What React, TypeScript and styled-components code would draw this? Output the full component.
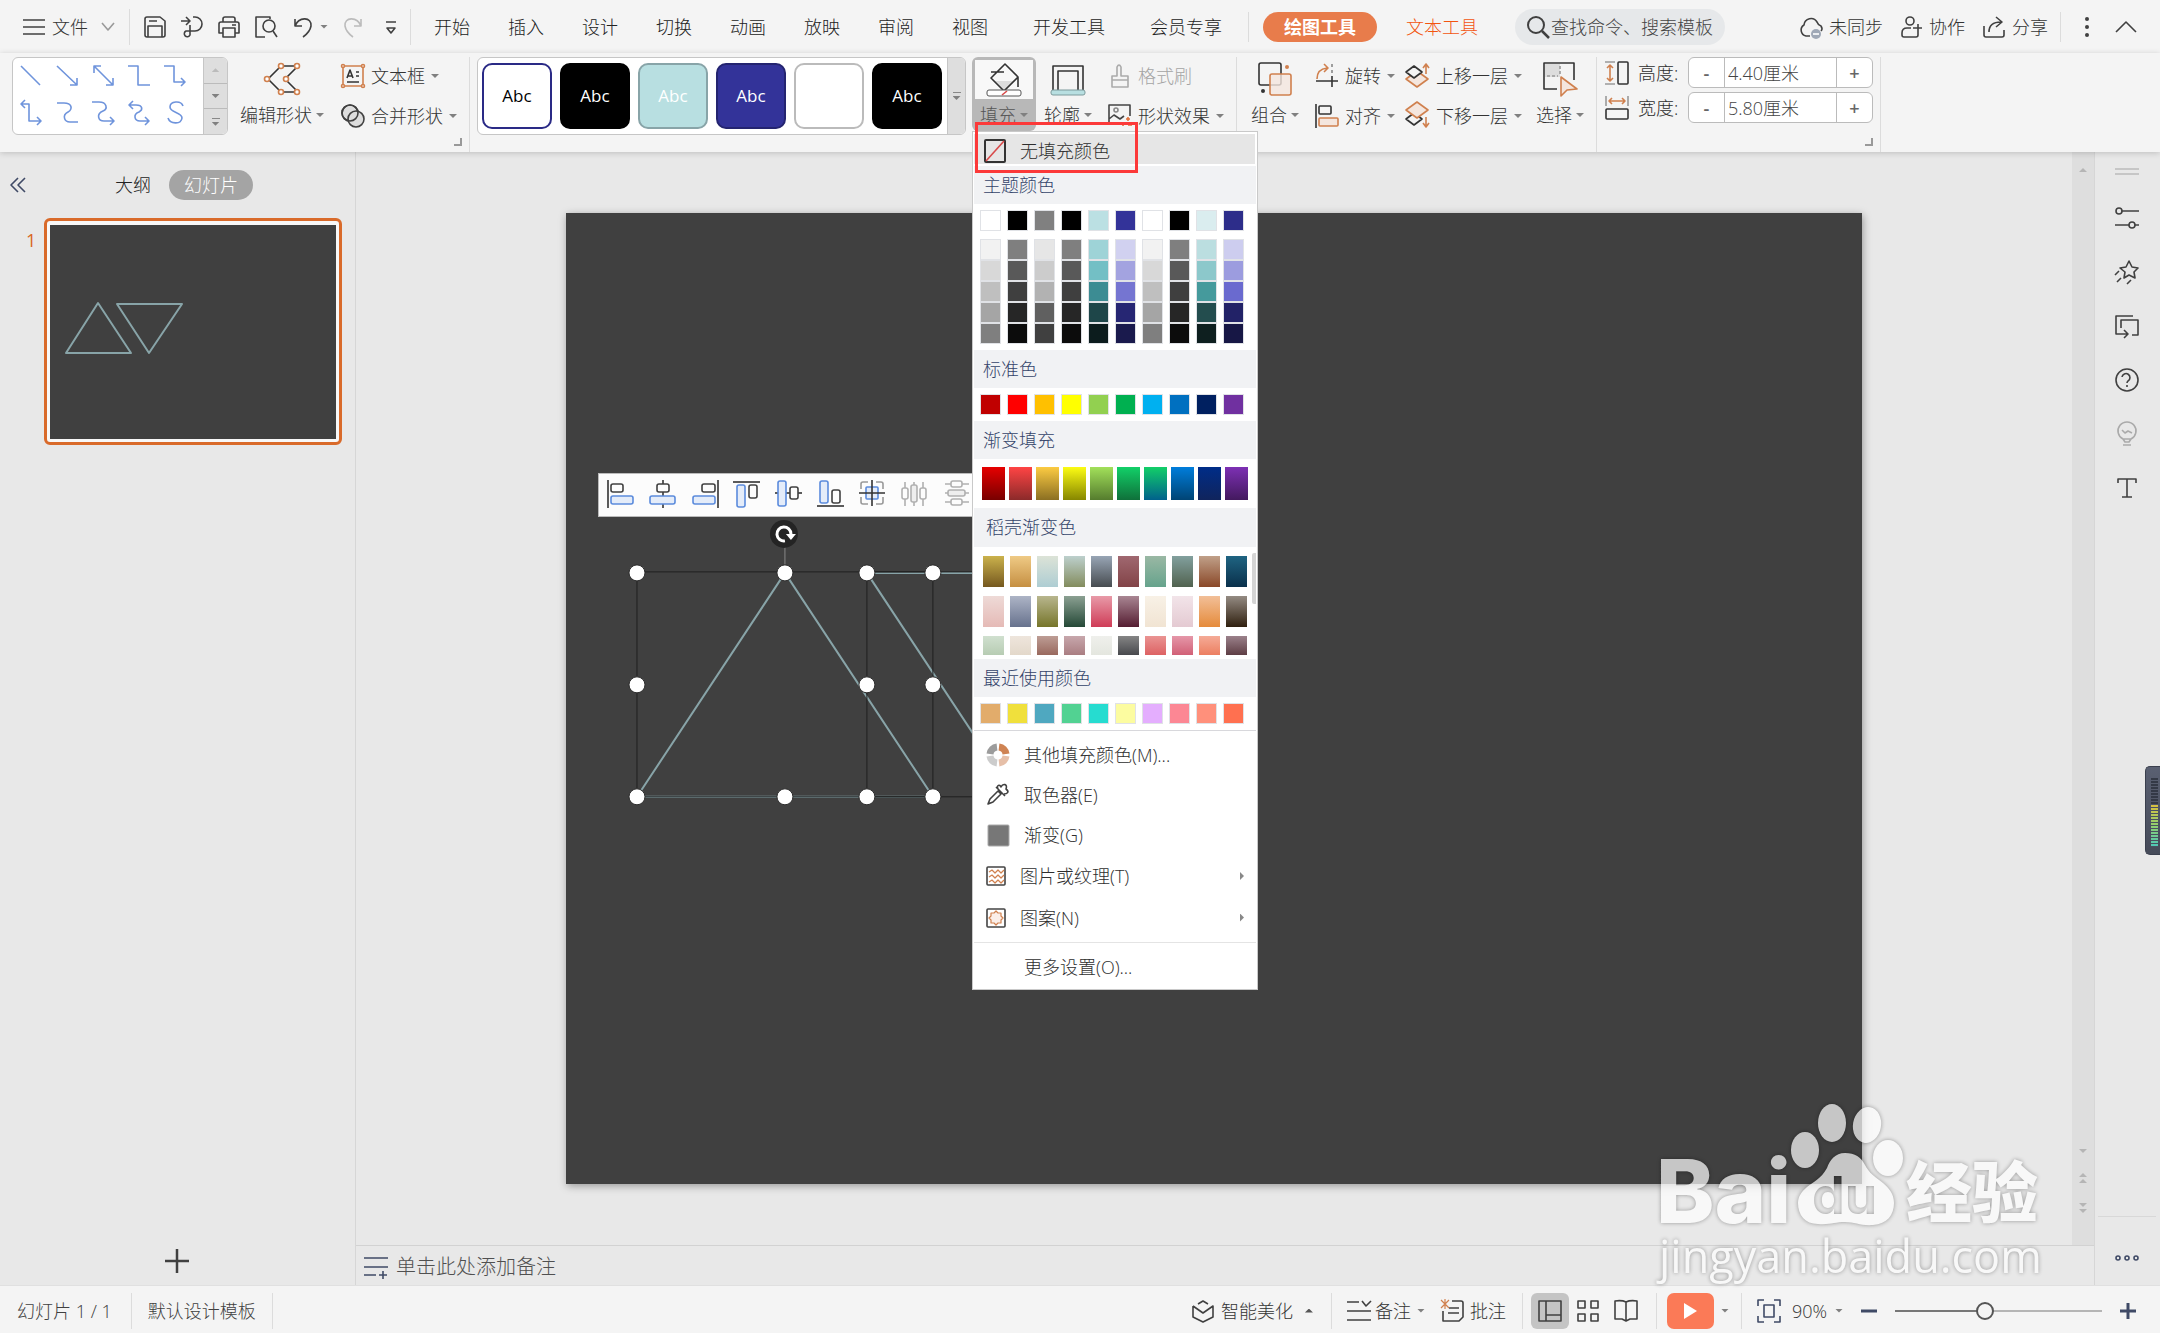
import React from 'react';
import styled, { createGlobalStyle, css } from 'styled-components';

const GlobalStyle = createGlobalStyle`
  * { box-sizing: border-box; }
  html, body { margin: 0; padding: 0; }
  body {
    font-family: "Open Sans", "Noto Sans CJK SC", sans-serif;
    font-weight: 300;
    font-size: 18px;
    line-height: 24px;
    color: #2e2e2e;
    background: #e8e8e8;
    overflow: hidden;
  }
  button, input, select, textarea {
    font: inherit;
    color: inherit;
    border: 0;
    padding: 0;
    margin: 0;
    background: none;
    outline: none;
  }
  button { cursor: pointer; white-space: nowrap; }
`;

/* ---------- shared parts ---------- */

const Shell = styled.div`
  display: flex;
  flex-direction: column;
  height: 100vh;
`;

const Row = styled.div<{ $gap?: number; $ml?: number }>`
  display: flex;
  align-items: center;
  gap: ${(p) => p.$gap ?? 0}px;
  margin-left: ${(p) => p.$ml ?? 0}px;
`;

const Caret = styled.i<{ $up?: boolean; $color?: string }>`
  width: 8px;
  height: 4px;
  flex: none;
  background: ${(p) => p.$color ?? '#808080'};
  clip-path: ${(p) => (p.$up ? 'polygon(50% 0, 100% 100%, 0 100%)' : 'polygon(0 0, 100% 0, 50% 100%)')};
`;

const VLine = styled.span<{ $h: number; $ml?: number; $mr?: number }>`
  width: 1px;
  height: ${(p) => p.$h}px;
  flex: none;
  background: #dcdcdc;
  margin-left: ${(p) => p.$ml ?? 0}px;
  margin-right: ${(p) => p.$mr ?? 0}px;
`;

const Svg = styled.svg`
  display: block;
  flex: none;
  fill: none;
  stroke: currentColor;
  stroke-linejoin: round;
  overflow: visible;
`;

type IconProps = { w: number; h: number; children: React.ReactNode; color?: string };
const Icon = ({ w, h, children, color = '#404040' }: IconProps) => (
  <Svg width={w} height={h} viewBox={`0 0 ${w} ${h}`} strokeWidth="1.6" color={color} aria-hidden="true">
    {children}
  </Svg>
);

const OR = '#d0804e';
const ORF = '#f4e6de';

/* ---------- title bar ---------- */

const TitleBar = styled.header`
  display: flex;
  align-items: center;
  height: 53px;
  padding: 0 23px;
  background: #f4f4f4;
`;

const TextButton = styled.button<{ $gap?: number; $muted?: boolean }>`
  display: flex;
  align-items: center;
  gap: ${(p) => p.$gap ?? 6}px;
  color: ${(p) => (p.$muted ? '#a4a4a4' : '#333')};
`;

const Tabs = styled.nav`
  display: flex;
  align-items: center;
  gap: 38px;
  margin-left: 23px;
`;

const Tab = styled.button<{ $long?: boolean }>`
  color: #222;
  padding-left: ${(p) => (p.$long ? 7 : 0)}px;
`;

const ActiveTab = styled.button`
  height: 30px;
  padding: 0 21px;
  margin: 0 29px 0 14px;
  border-radius: 15px;
  background: #e87c4b;
  color: #fff;
  font-weight: 700;
`;

const AccentTab = styled.button`
  color: #f25410;
`;

const Search = styled.label`
  display: flex;
  align-items: center;
  width: 210px;
  height: 36px;
  margin-left: 37px;
  padding-left: 12px;
  border-radius: 18px;
  background: #e6e8ea;
`;

const SearchInput = styled.input`
  flex: 1;
  min-width: 0;
  height: 24px;
  &::placeholder { color: #444; opacity: 1; }
`;

const Account = styled.div`
  display: flex;
  align-items: center;
  margin-left: auto;
  gap: 18px;
`;

/* ---------- ribbon ---------- */

const Ribbon = styled.div`
  position: relative;
  z-index: 2;
  display: flex;
  align-items: flex-start;
  height: 99px;
  padding: 4px 0 0 12px;
  background: #f4f4f4;
  box-shadow: 0 1px 6px rgba(0, 0, 0, 0.18);
`;

const Group = styled.section<{ $ml?: number; $pr?: number }>`
  position: relative;
  display: flex;
  align-items: flex-start;
  height: 95px;
  padding-right: ${(p) => p.$pr ?? 12}px;
  margin-left: ${(p) => p.$ml ?? 0}px;
  border-right: 1px solid #dcdcdc;
`;

const Launcher = styled.button`
  position: absolute;
  right: 7px;
  bottom: 6px;
  width: 8px;
  height: 8px;
  border-right: 2px solid #999;
  border-bottom: 2px solid #999;
`;

const Gallery = styled.div<{ $w: number }>`
  display: flex;
  width: ${(p) => p.$w}px;
  height: 78px;
  background: #fff;
  border: 1px solid #c6c6c6;
  border-radius: 6px;
  overflow: hidden;
`;

const LineGrid = styled.div`
  flex: 1;
  display: grid;
  grid-template-columns: repeat(5, 36px);
  grid-template-rows: 36px 36px;
  padding-left: 1px;
`;

const LineButton = styled.button`
  display: grid;
  place-items: center;
`;

const GalleryScroll = styled.div<{ $w: number }>`
  width: ${(p) => p.$w}px;
  display: flex;
  flex-direction: column;
  border-left: 1px solid #c6c6c6;
  background: #dedede;
`;

const ScrollStep = styled.button`
  flex: 1;
  display: flex;
  flex-direction: column;
  align-items: center;
  justify-content: center;
  gap: 3px;
  & + & { border-top: 1px solid #bbb; }
`;

const Dash = styled.i`
  width: 8px;
  height: 1px;
  background: #888;
`;

const StyleList = styled.div`
  flex: 1;
  display: flex;
  align-items: center;
  gap: 8px;
  padding-left: 4px;
`;

const StyleTile = styled.button<{ $bg: string; $border: string; $fg: string }>`
  width: 70px;
  height: 66px;
  border-radius: 10px;
  border: 2px solid ${(p) => p.$border};
  background: ${(p) => p.$bg};
  color: ${(p) => p.$fg};
  font-weight: 400;
  font-size: 17px;
`;

const BigButton = styled.button<{ $ml?: number }>`
  display: flex;
  flex-direction: column;
  align-items: center;
  gap: 7px;
  padding-top: 5px;
  margin-left: ${(p) => p.$ml ?? 0}px;
  color: #333;
`;

const Label = styled.span`
  display: flex;
  align-items: center;
  gap: 4px;
  height: 24px;
`;

const Stack = styled.div<{ $ml?: number }>`
  display: flex;
  flex-direction: column;
  gap: 16px;
  padding-top: 7px;
  margin-left: ${(p) => p.$ml ?? 0}px;
`;

const FillWrap = styled.div`
  position: relative;
  margin-left: 6px;
`;

const FillButton = styled.button`
  display: flex;
  flex-direction: column;
  align-items: center;
  width: 64px;
  height: 74px;
  padding: 3px;
  gap: 4px;
  border-radius: 6px;
  background: #b8b8b8;
  color: #555;
`;

const FillFace = styled.span`
  display: flex;
  justify-content: center;
  width: 58px;
  height: 39px;
  padding-top: 2px;
  background: #f8f8f8;
`;

const SizeStack = styled.div`
  display: flex;
  flex-direction: column;
  gap: 4px;
  margin-left: 8px;
`;

const SizeRow = styled.div`
  display: flex;
  align-items: center;
  gap: 9px;
  height: 31px;
`;

const SizeLabel = styled.label`
  width: 41px;
  white-space: nowrap;
`;

const Spinner = styled.div`
  display: flex;
  width: 185px;
  height: 31px;
  border: 1px solid #bbb;
  border-radius: 6px;
  background: #fff;
  overflow: hidden;
`;

const SpinStep = styled.button`
  width: 35px;
  font-weight: 600;
  color: #666;
`;

const SpinInput = styled.input`
  width: 113px;
  padding: 0 3px;
  border-left: 1px solid #bbb;
  border-right: 1px solid #bbb;
  color: #444;
`;

/* ---------- fill drop-down ---------- */

const Popup = styled.div`
  position: absolute;
  top: 74px;
  left: 0;
  width: 286px;
  padding: 2px 1px;
  background: #fff;
  border: 1px solid #c9c9c9;
  color: #2e2e2e;
`;

const NoFill = styled.button`
  display: flex;
  align-items: center;
  gap: 12px;
  width: 281px;
  height: 30px;
  padding: 3px 0 0 10px;
  margin-bottom: 2px;
  background: #e6e6e6;
`;

const Highlight = styled.span`
  position: absolute;
  left: 2px;
  top: -10px;
  width: 163px;
  height: 51px;
  border: 3px solid #fc3939;
  pointer-events: none;
`;

const Heading = styled.h3<{ $inset?: boolean }>`
  margin: 0;
  height: ${(p) => (p.$inset ? 39 : 38)}px;
  padding-left: ${(p) => (p.$inset ? 12 : 9)}px;
  background: #f1f2f4;
  color: #34446a;
  font-size: 18px;
  font-weight: 300;
  line-height: 38px;
`;

const Swatches = styled.div<{ $v: number; $bottom?: number }>`
  display: grid;
  grid-template-columns: repeat(10, 21px);
  column-gap: 6px;
  padding: ${(p) => p.$v}px 0 ${(p) => p.$bottom ?? p.$v}px 6px;
`;

const Swatch = styled.button<{ $c: string }>`
  height: 21px;
  border: 1px solid #e0e2e6;
  background: ${(p) => p.$c};
`;

const GradRow = styled.div`
  display: grid;
  grid-template-columns: repeat(10, 23px);
  column-gap: 4px;
  padding: 8px 0 8px 8px;
`;

const ShellRow = styled.div`
  display: grid;
  grid-template-columns: repeat(10, 21px);
  gap: 9px 6px;
  height: 112px;
  padding: 9px 0 4px 9px;
`;

const ShellArea = styled.div`
  display: flex;
  justify-content: space-between;
`;

const ShellThumb = styled.span`
  width: 4px;
  height: 51px;
  margin-top: 6px;
  border-radius: 2px 0 0 2px;
  background: #d4d4d4;
`;

const GradSwatch = styled.button<{ $a: string; $b: string; $h: number }>`
  height: ${(p) => p.$h}px;
  background: linear-gradient(${(p) => p.$a}, ${(p) => p.$b});
`;

const Rule = styled.hr<{ $c: string }>`
  height: 1px;
  margin: 0;
  border: 0;
  background: ${(p) => p.$c};
`;

const MenuItem = styled.button<{ $h: number; $plain?: boolean }>`
  display: flex;
  align-items: center;
  gap: 14px;
  width: 100%;
  height: ${(p) => p.$h}px;
  padding: ${(p) => (p.$plain ? '4px 12px 0 50px' : '0 12px')};
`;

const Submenu = styled.i`
  width: 4px;
  height: 8px;
  margin-left: auto;
  background: #888;
  clip-path: polygon(0 0, 100% 50%, 0 100%);
`;

/* ---------- body ---------- */

const Body = styled.div`
  flex: 1;
  display: flex;
  min-height: 0;
`;

const Outline = styled.aside`
  display: flex;
  flex-direction: column;
  flex: none;
  width: 356px;
  border-right: 1px solid #d6d6d6;
`;

const OutlineHead = styled.div`
  display: flex;
  align-items: center;
  height: 66px;
  padding: 0 10px;
`;

const OutlineTab = styled.button<{ $on?: boolean }>`
  height: 30px;
  color: #222;
  ${(p) =>
    p.$on
      ? css`
          margin-left: 18px;
          padding: 0 15px;
          border-radius: 15px;
          background: #a4a4a4;
          color: #fff;
        `
      : css`
          margin-left: 89px;
        `}
`;

const ThumbRow = styled.div`
  display: flex;
  gap: 8px;
  padding-left: 26px;
  color: #d9661c;
  line-height: 44px;
  font-weight: 400;
`;

const Thumb = styled.button`
  width: 298px;
  height: 227px;
  padding: 3px;
  border: 3px solid #d96a2a;
  border-radius: 6px;
  background: #f8f8f8;
  & > svg { background: #404040; stroke: #88a4a8; }
`;

const AddSlide = styled.button`
  margin: auto 0 12px 165px;
  width: 24px;
  height: 24px;
`;

const Main = styled.main`
  flex: 1;
  display: flex;
  flex-direction: column;
  min-width: 0;
`;

const Stage = styled.div`
  flex: 1;
  display: flex;
  min-height: 0;
`;

const Workspace = styled.div`
  flex: 1;
  display: flex;
  align-items: center;
  justify-content: center;
`;

const Slide = styled.div`
  position: relative;
  width: 75.5%;
  aspect-ratio: 4 / 3;
  background: #404040;
  box-shadow: 1px 2px 8px rgba(0, 0, 0, 0.35);
`;

const FloatBar = styled.div`
  position: absolute;
  left: 32px;
  top: 260px;
  display: flex;
  align-items: center;
  gap: 14px;
  height: 44px;
  padding: 0 8px 2px;
  border: 1px solid #bbb;
  background: #fcfcfc;
`;

const SlideArt = styled.svg`
  display: block;
  width: 100%;
  height: 100%;
`;

const ScrollTrack = styled.div`
  display: flex;
  flex-direction: column;
  align-items: center;
  gap: 20px;
  width: 22px;
  padding: 16px 0 32px;
  background: #dedede;
`;

const ScrollArrow = styled.button<{ $bottom?: boolean }>`
  display: flex;
  flex-direction: column;
  gap: 2px;
  margin-top: ${(p) => (p.$bottom ? 'auto' : '0')};
`;

const Notes = styled.label`
  display: flex;
  align-items: center;
  gap: 8px;
  height: 40px;
  padding: 2px 0 0 8px;
  border-top: 1px solid #d2d2d2;
`;

const NotesInput = styled.input`
  flex: 1;
  height: 30px;
  font-size: 20px;
  &::placeholder { color: #505050; opacity: 1; }
`;

const SidePane = styled.aside`
  display: flex;
  flex-direction: column;
  align-items: center;
  flex: none;
  width: 66px;
  padding-right: 2px;
  border-left: 1px solid #d6d6d6;
`;

const SideButton = styled.button`
  display: grid;
  place-items: center;
  width: 40px;
  height: 54px;
`;

const SideGrip = styled.button`
  display: grid;
  place-items: center;
  width: 40px;
  height: 39px;
`;

const SideMore = styled.button`
  display: grid;
  place-items: center;
  width: 58px;
  height: 69px;
  margin-top: auto;
  padding: 28px 0 14px;
  border-top: 1px solid #d8d8d8;
`;

const Meter = styled.div`
  position: absolute;
  right: 0;
  top: 766px;
  width: 15px;
  height: 89px;
  padding: 11px 0 0 5px;
  border: 1px solid #3a3f4d;
  border-right: 0;
  border-radius: 5px 0 0 5px;
  background: linear-gradient(#5a6072, #454a58);
`;

/* ---------- status bar ---------- */

const StatusBar = styled.footer`
  display: flex;
  align-items: center;
  height: 48px;
  padding: 2px 24px 0 17px;
  border-top: 1px solid #e0e0e0;
  background: #f4f4f4;
  color: #404040;
`;

const StatusTools = styled.div`
  display: flex;
  align-items: center;
  margin-left: auto;
`;

const ViewButton = styled.button<{ $on?: boolean }>`
  display: grid;
  place-items: center;
  width: 38px;
  height: 36px;
  border-radius: 6px;
  background: ${(p) => (p.$on ? '#c4c4c4' : 'transparent')};
`;

const PlayButton = styled.button`
  display: grid;
  place-items: center;
  width: 47px;
  height: 36px;
  margin-left: 10px;
  margin-right: 7px;
  border-radius: 7px;
  background: #fb7a57;
`;

const ZoomSlider = styled.input`
  appearance: none;
  width: 207px;
  height: 20px;
  margin: 0 18px;
  background: linear-gradient(90deg, #777 43%, #b5b5b5 43%) center / 100% 2px no-repeat;
  &::-webkit-slider-thumb {
    appearance: none;
    width: 18px;
    height: 18px;
    border: 2px solid #555;
    border-radius: 50%;
    background: #f4f4f4;
  }
`;

const Watermark = styled.svg`
  position: absolute;
  right: 115px;
  bottom: 43px;
  z-index: 3;
  pointer-events: none;
  opacity: 0.7;
  filter: drop-shadow(0 0 2px rgba(0, 0, 0, 0.5));
`;

/* ---------- data ---------- */

const tabs = ['开始', '插入', '设计', '切换', '动画', '放映', '审阅', '视图'];
const longTabs = ['开发工具', '会员专享'];

const lineShapes = [
  'M1 1 L20 20',
  'M1 1 L21 20 M21 13 V20 H14',
  'M2 1 L21 20 M21 13 V20 H14 M2 8 V1 H9',
  'M0 1 H10 V20 H22',
  'M0 1 H10 V17 H21 M17 13 L21 17 L17 21',
  'M1 3 H9 V20 H21 M17 16 L21 20 L17 24 M5 -1 L1 3 L5 7',
  'M1 2 H8 C16 2 17 8 12 11 C6 14 8 21 14 21 H22',
  'M0 1 H7 C15 1 16 8 11 10 C4 13 6 20 12 20 H22 M18 16 L22 20 L18 24',
  'M1 4 H8 C15 4 15 9 11 11 C5 13 6 20 12 20 H21 M17 16 L21 20 L17 24 M5 0 L1 4 L5 8',
  'M19 5 C17 -1 6 0 6 6 C6 12 18 11 18 17 C17 24 6 23 4 17',
];

const tiles = [
  { bg: '#fff', border: '#2a2a86', fg: '#000', text: 'Abc' },
  { bg: '#000', border: '#000', fg: '#fff', text: 'Abc' },
  { bg: '#b8dfe1', border: '#88a4a8', fg: '#fff', text: 'Abc' },
  { bg: '#333399', border: '#242470', fg: '#fff', text: 'Abc' },
  { bg: '#fff', border: '#bbb', fg: '#fff', text: '' },
  { bg: '#000', border: '#000', fg: '#fff', text: 'Abc' },
];

const theme = ['#ffffff', '#000000', '#808080', '#000000', '#bbe0e3', '#333399', '#ffffff', '#000000', '#daedef', '#2d2d8a'];
const shades = [
  ['#f2f2f2', '#7f7f7f', '#e6e6e6', '#7f7f7f', '#9ed3d7', '#d1d1f0', '#f2f2f2', '#7f7f7f', '#bbdee0', '#cdcdef'],
  ['#d8d8d8', '#595959', '#cccccc', '#595959', '#73bfc5', '#a3a3e0', '#d8d8d8', '#595959', '#8cc8cb', '#9c9cdf'],
  ['#bfbfbf', '#3f3f3f', '#b2b2b2', '#3f3f3f', '#3c8c93', '#7575d1', '#bfbfbf', '#3f3f3f', '#459a9c', '#6a6acf'],
  ['#a5a5a5', '#262626', '#606060', '#262626', '#1e4649', '#262673', '#a5a5a5', '#262626', '#234d4e', '#222267'],
  ['#7f7f7f', '#0c0c0c', '#404040', '#0c0c0c', '#0c1c1d', '#1a1a4d', '#7f7f7f', '#0c0c0c', '#0e1f1f', '#171745'],
];
const standard = ['#c00000', '#ff0000', '#ffc000', '#ffff00', '#92d050', '#00b050', '#00b0f0', '#0070c0', '#002060', '#7030a0'];
const recent = ['#e2ac6b', '#f0e03c', '#4fa8c0', '#52d292', '#26dcd0', '#fcfca0', '#e4aefe', '#fc8794', '#ff907b', '#ff7050'];
const gradients = [
  ['#e60000', '#780000'], ['#ff4444', '#8b2a2a'], ['#fccb42', '#8b6f22'], ['#fcfc14', '#868600'], ['#a2e05a', '#557c2e'],
  ['#12d068', '#0f703a'], ['#12cf68', '#00618c'], ['#007ddb', '#004474'], ['#002d88', '#10245c'], ['#7d30b4', '#43195e'],
];
const shell = [
  ['#cbb24c', '#75581f'], ['#efca85', '#c58f42'], ['#dce3d7', '#aecdd3'], ['#bdd0cd', '#838c5d'], ['#98a5b5', '#474c50'],
  ['#a06870', '#824347'], ['#9ab8a4', '#66a38c'], ['#82a09e', '#51624f'], ['#c0a089', '#8a4828'], ['#1f6482', '#0a304b'],
  ['#eedad7', '#e5bab6'], ['#adb4c6', '#67728d'], ['#b8b68e', '#76752a'], ['#8ba092', '#254937'], ['#e89aa8', '#cf3c57'],
  ['#a98693', '#551d31'], ['#f8f1e6', '#f1e4d3'], ['#f2e4e9', '#e4cad2'], ['#f2bf98', '#e58b3b'], ['#948b83', '#30200f'],
  ['#d0e0cf', '#b7ccb3'], ['#eee5dc', '#e3d8ca'], ['#bd9d95', '#99695e'], ['#c7a7ac', '#aa7e82'], ['#eff0ec', '#e4e6df'],
  ['#858585', '#48494d'], ['#ea9493', '#dd6263'], ['#e597a9', '#d16076'], ['#f5ab97', '#ec7f61'], ['#9b818b', '#5e3e44'],
];

/* ---------- ribbon icons ---------- */

const Diamonds = ({ up }: { up?: boolean }) => (
  <Icon w={25} h={24}>
    {up ? (
      <>
        <path d="M12 7 L23 15 L12 23 L1 15 Z" fill={ORF} stroke={OR} />
        <path d="M9 2 L17 8 L9 14 L1 8 Z" fill="#f4f4f4" stroke="#333" />
        <path d="M21 10 V0 M18 4 L21 0 L24 4" stroke={OR} />
      </>
    ) : (
      <>
        <path d="M9 9 L17 15 L9 21 L1 15 Z" stroke="#333" />
        <path d="M12 -2 L23 6 L12 14 L1 6 Z" fill={ORF} stroke={OR} />
        <path d="M21 13 V23 M18 19 L21 23 L24 19" stroke={OR} />
      </>
    )}
  </Icon>
);

const MenuLabel = ({ children }: { children: React.ReactNode }) => (
  <>
    <span>{children}</span>
    <Caret />
  </>
);

const NAVY = '#3f4a66';
const BLUE = '#5b8bdc';
const BLUEF = '#e4ecf9';

const alignIcons: React.ReactNode[] = [
  <><path d="M1 0 V28" stroke="#333" /><rect x="4" y="4" width="12" height="8" rx="2" /><rect x="4" y="16" width="22" height="8" rx="2" fill={BLUEF} stroke={BLUE} /></>,
  <><path d="M14 0 V28" stroke="#333" /><rect x="8" y="4" width="12" height="8" rx="2" fill="#fcfcfc" /><rect x="1" y="16" width="25" height="8" rx="2" fill={BLUEF} stroke={BLUE} /></>,
  <><path d="M27 0 V28" stroke="#333" /><rect x="11" y="4" width="13" height="8" rx="2" /><rect x="2" y="16" width="22" height="8" rx="2" fill={BLUEF} stroke={BLUE} /></>,
  <><path d="M0 2 H27" stroke="#333" /><rect x="4" y="5" width="8" height="22" rx="2" fill={BLUEF} stroke={BLUE} /><rect x="16" y="5" width="8" height="13" rx="2" /></>,
  <><path d="M0 13 H27" stroke="#333" /><rect x="3" y="1" width="8" height="25" rx="2" fill={BLUEF} stroke={BLUE} /><rect x="15" y="7" width="8" height="12" rx="2" fill="#fcfcfc" /></>,
  <><path d="M0 26 H27" stroke="#333" /><rect x="3" y="1" width="8" height="22" rx="2" fill={BLUEF} stroke={BLUE} /><rect x="15" y="10" width="8" height="13" rx="2" /></>,
  <><path d="M2 9 V4 Q2 2 4 2 H9 M17 2 H22 Q24 2 24 4 V9 M24 17 V22 Q24 24 22 24 H17 M9 24 H4 Q2 24 2 22 V17" stroke="#999" /><rect x="7" y="7" width="12" height="12" rx="1" fill={BLUEF} stroke={BLUE} /><path d="M13 0 V26 M0 13 H26" stroke="#333" /></>,
  <g stroke="#b0b0b0"><path d="M4 2 V26 M13 2 V26 M22 2 V26" /><rect x="1" y="8" width="6" height="11" rx="2" fill="#fcfcfc" /><rect x="10" y="5" width="6" height="17" rx="2" fill="#eee" /><rect x="19" y="8" width="6" height="11" rx="2" fill="#fcfcfc" /></g>,
  <g stroke="#b0b0b0"><path d="M2 4 H26 M2 13 H26 M2 22 H26" /><rect x="8" y="1" width="11" height="6" rx="2" fill="#fcfcfc" /><rect x="5" y="10" width="17" height="6" rx="2" fill="#eee" /><rect x="8" y="19" width="11" height="6" rx="2" fill="#fcfcfc" /></g>,
];
const alignNames = ['左对齐', '水平居中', '右对齐', '靠上对齐', '垂直居中', '靠下对齐', '中心对齐', '横向分布', '纵向分布'];

/* Selection handles in slide units (1296 x 972). */
const handles: [number, number][] = [
  [71, 360], [219, 360], [71, 472], [71, 584], [219, 584],
  [301, 360], [301, 472], [301, 584], [367, 360], [367, 472], [367, 584],
];

/* ---------- sections ---------- */

function Title() {
  return (
    <TitleBar>
      <TextButton $gap={7}>
        <Icon w={22} h={22}><path d="M0 4 H22 M0 11 H22 M0 18 H22" /></Icon>
        <span>文件</span>
        <Row $ml={6}><Icon w={14} h={10} color="#999"><path d="M1 1 L7 8 L13 1" /></Icon></Row>
      </TextButton>
      <VLine $h={36} $ml={14} $mr={14} />
      <Row $gap={15}>
        <button aria-label="保存"><Icon w={22} h={22}><path d="M3 1 H16 L21 5 V19 Q21 21 19 21 H3 Q1 21 1 19 V3 Q1 1 3 1 Z M4 21 V10 H18 V21 M5 5 H13" /></Icon></button>
        <button aria-label="输出"><Icon w={22} h={22}><path d="M0 5 H8 M5 1 L9 5 L5 9 M12 1 H14 A6 6 0 0 1 14 15 H5 A3 3 0 1 0 9 19 V9" /></Icon></button>
        <button aria-label="打印"><Icon w={22} h={22}><path d="M5 6 V3 Q5 1 7 1 H15 Q17 1 17 3 V6 M5 17 H1 V8 Q1 6 3 6 H19 Q21 6 21 8 V17 H17 M5 12 H17 V21 H5 Z M14 9 H18" /></Icon></button>
        <button aria-label="打印预览"><Icon w={22} h={22}><path d="M15 3 V1 H1 V21 H10" /><circle cx="14" cy="10" r="6" /><path d="M18 15 L22 21" /></Icon></button>
        <Row $gap={6}>
          <button aria-label="撤销"><Icon w={22} h={22}><path d="M3 3 V10 H10 M3 10 C7 0 20 1 19 10 Q18 16 11 21" /></Icon></button>
          <Caret />
        </Row>
        <button aria-label="恢复"><Icon w={22} h={22} color="#bbb"><path d="M18 3 V10 H11 M18 10 C14 0 1 1 2 10 Q3 16 10 21" /></Icon></button>
        <button aria-label="自定义"><Icon w={22} h={22}><path d="M6 6 H16 M7 12 L11 17 L15 12 Z" /></Icon></button>
      </Row>
      <VLine $h={36} $ml={8} />
      <Tabs>
        {tabs.map((t) => <Tab key={t}>{t}</Tab>)}
        {longTabs.map((t) => <Tab key={t} $long>{t}</Tab>)}
      </Tabs>
      <VLine $h={30} $ml={26} />
      <ActiveTab>绘图工具</ActiveTab>
      <AccentTab>文本工具</AccentTab>
      <Search>
        <Icon w={24} h={24}><circle cx="9" cy="10" r="8" strokeWidth="2" /><path d="M15 16 L22 23" strokeWidth="2.5" /></Icon>
        <SearchInput type="text" aria-label="搜索" placeholder="查找命令、搜索模板" />
      </Search>
      <Account>
        <TextButton>
          <Icon w={24} h={24}><path d="M11 21 H7 A6 6 0 0 1 5 10 A7 7 0 0 1 18 7 Q19 10 22 11 Q24 14 22 16" /><circle cx="17" cy="19" r="5" fill="#9fa8b6" stroke="none" /><path d="M14 19 H20" stroke="#fff" /></Icon>
          未同步
        </TextButton>
        <TextButton>
          <Icon w={22} h={24}><circle cx="9" cy="6" r="4" /><path d="M10 13 H6 Q1 13 1 18 V20 Q1 22 3 22 H15 Q17 22 17 20 V18 M12 13 H21 M17 9 V18" /></Icon>
          协作
        </TextButton>
        <TextButton>
          <Icon w={23} h={24}><path d="M1 11 V20 Q1 22 3 22 H19 Q21 22 21 20 V15 M6 17 Q6 7 18 7 M13 2 L19 7 L13 12" /></Icon>
          分享
        </TextButton>
        <VLine $h={30} $ml={-6} />
        <button aria-label="更多"><Icon w={18} h={24}><g fill="currentColor" stroke="none"><circle cx="8" cy="4" r="2" /><circle cx="8" cy="12" r="2" /><circle cx="8" cy="20" r="2" /></g></Icon></button>
        <button aria-label="收起功能区"><Icon w={22} h={14}><path d="M1 12 L11 2 L21 12" /></Icon></button>
      </Account>
    </TitleBar>
  );
}

function FillMenu() {
  return (
    <Popup role="menu">
      <NoFill role="menuitem">
        <Icon w={24} h={24}><rect x="1" y="1" width="20" height="22" rx="1" stroke="#333" strokeWidth="2" /><path d="M2 22 L20 2" stroke="#d84a4a" /></Icon>
        无填充颜色
      </NoFill>
      <Heading>主题颜色</Heading>
      <Swatches $v={6}>
        {theme.map((c, i) => <Swatch key={i} $c={c} aria-label={c} />)}
      </Swatches>
      <Swatches $v={2} $bottom={6}>
        {shades.flat().map((c, i) => <Swatch key={i} $c={c} aria-label={c} />)}
      </Swatches>
      <Heading>标准色</Heading>
      <Swatches $v={6}>
        {standard.map((c) => <Swatch key={c} $c={c} aria-label={c} />)}
      </Swatches>
      <Heading>渐变填充</Heading>
      <GradRow>
        {gradients.map(([a, b]) => <GradSwatch key={a + b} $a={a} $b={b} $h={33} aria-label={a} />)}
      </GradRow>
      <Heading $inset>稻壳渐变色</Heading>
      <ShellArea>
        <ShellRow>
          {shell.map(([a, b], i) => <GradSwatch key={i} $a={a} $b={b} $h={i < 20 ? 31 : 19} aria-label={a} />)}
        </ShellRow>
        <ShellThumb />
      </ShellArea>
      <Heading>最近使用颜色</Heading>
      <Swatches $v={6}>
        {recent.map((c) => <Swatch key={c} $c={c} aria-label={c} />)}
      </Swatches>
      <Rule $c="#d8d8dc" />
      <MenuItem $h={48} role="menuitem">
        <Icon w={24} h={24}>
          <g strokeWidth="7">
            <path d="M4 11 A8 8 0 0 1 11 4" stroke="#9c9c9c" /><path d="M13 4 A8 8 0 0 1 20 11" stroke="#cf8353" />
            <path d="M20 13 A8 8 0 0 1 13 20" stroke="#e6bfa8" /><path d="M11 20 A8 8 0 0 1 4 13" stroke="#cccccc" />
          </g>
        </Icon>
        其他填充颜色(M)...
      </MenuItem>
      <MenuItem $h={32} role="menuitem">
        <Icon w={24} h={24}><path d="M2 21 L4 16 L12 8 L15 11 L7 19 Z M10 4 L19 13 M12 6 C10 2 14 1 15 4 C17 0 22 1 20 6 C24 9 21 11 18 11" /></Icon>
        取色器(E)
      </MenuItem>
      <MenuItem $h={48} role="menuitem">
        <Icon w={24} h={24}><rect x="2" y="2" width="21" height="21" rx="1" fill="#777" stroke="#aaa" strokeWidth="1" /></Icon>
        渐变(G)
      </MenuItem>
      <MenuItem $h={34} role="menuitem">
        <Icon w={20} h={20}><rect x="1" y="1" width="18" height="18" rx="1" stroke="#444" /><path d="M3 6 L6 4 L9 7 L12 4 L15 7 L18 4 M3 11 L6 9 L9 12 L12 9 L15 12 L18 9 M3 16 L6 14 L9 17 L12 14 L15 17 L18 14" stroke={OR} strokeWidth="1.2" /></Icon>
        图片或纹理(T)
        <Submenu />
      </MenuItem>
      <MenuItem $h={49} role="menuitem">
        <Icon w={20} h={20}><rect x="1" y="1" width="18" height="18" rx="1" stroke="#444" /><path d="M10 3 L12 5 H15 V8 L17 10 L15 12 V15 H12 L10 17 L8 15 H5 V12 L3 10 L5 8 V5 H8 Z" fill="#fbeee8" stroke={OR} strokeWidth="1.2" /></Icon>
        图案(N)
        <Submenu />
      </MenuItem>
      <Rule $c="#e4e4e4" />
      <MenuItem $h={44} $plain role="menuitem">更多设置(O)...</MenuItem>
      <Highlight />
    </Popup>
  );
}

function SizeField({ id, label, value, tall }: { id: string; label: string; value: string; tall?: boolean }) {
  return (
    <SizeRow>
      <Icon w={24} h={26}>
        {tall ? (
          <><rect x="13" y="2" width="10" height="22" rx="1" stroke="#333" /><path d="M0 2 H10 M0 24 H10" stroke="#999" /><path d="M5 5 V21 M2 8 L5 5 L8 8 M2 18 L5 21 L8 18" stroke={OR} /></>
        ) : (
          <><rect x="1" y="14" width="22" height="10" rx="1" stroke="#333" /><path d="M1 1 V11 M23 1 V11" stroke="#999" /><path d="M4 6 H20 M7 3 L4 6 L7 9 M17 3 L20 6 L17 9" stroke={OR} /></>
        )}
      </Icon>
      <SizeLabel htmlFor={id}>{label}</SizeLabel>
      <Spinner>
        <SpinStep aria-label="减小">-</SpinStep>
        <SpinInput id={id} defaultValue={value} />
        <SpinStep aria-label="增大">+</SpinStep>
      </Spinner>
    </SizeRow>
  );
}

function RibbonBar() {
  return (
    <Ribbon>
      <Group>
        <Gallery $w={216}>
          <LineGrid>
            {lineShapes.map((d) => (
              <LineButton key={d} aria-label="线条"><Icon w={24} h={22} color="#6f94dc"><path d={d} /></Icon></LineButton>
            ))}
          </LineGrid>
          <GalleryScroll $w={24}>
            <ScrollStep aria-label="上一行"><Caret $up $color="#bbb" /></ScrollStep>
            <ScrollStep aria-label="下一行"><Caret /></ScrollStep>
            <ScrollStep aria-label="更多形状"><Dash /><Caret /></ScrollStep>
          </GalleryScroll>
        </Gallery>
        <BigButton $ml={12}>
          <Icon w={38} h={34}>
            <path d="M18 4 H35 L22 17 L35 30 H18 L5 17 Z" stroke="#333" />
            <g fill="#fff" stroke={OR}><circle cx="18" cy="4" r="2.5" /><circle cx="34" cy="4" r="2.5" /><circle cx="23" cy="17" r="2.5" /><circle cx="34" cy="30" r="2.5" /><circle cx="18" cy="30" r="2.5" /><circle cx="4" cy="17" r="2.5" /></g>
          </Icon>
          <Label><MenuLabel>编辑形状</MenuLabel></Label>
        </BigButton>
        <Stack $ml={17}>
          <TextButton>
            <Icon w={24} h={24}>
              <rect x="2" y="2" width="20" height="20" stroke={OR} />
              <g fill="#fff" stroke={OR}><circle cx="2" cy="2" r="1.5" /><circle cx="22" cy="2" r="1.5" /><circle cx="2" cy="22" r="1.5" /><circle cx="22" cy="22" r="1.5" /></g>
              <path d="M6 14 L9 6 L12 14 M7 12 H11 M15 8 H18 M15 12 H18 M6 18 H18" stroke="#333" />
            </Icon>
            <MenuLabel>文本框</MenuLabel>
          </TextButton>
          <TextButton>
            <Icon w={24} h={24}><circle cx="9" cy="9" r="8" fill="#ddd" /><circle cx="15" cy="15" r="8" fill="#ddd" /><circle cx="9" cy="9" r="8" /></Icon>
            <MenuLabel>合并形状</MenuLabel>
          </TextButton>
        </Stack>
        <Launcher aria-label="更多选项" />
      </Group>
      <Group $ml={7}>
        <Gallery $w={489}>
          <StyleList>
            {tiles.map((t, i) => (
              <StyleTile key={i} $bg={t.bg} $border={t.border} $fg={t.fg} aria-label="形状样式">{t.text}</StyleTile>
            ))}
          </StyleList>
          <GalleryScroll $w={18}><ScrollStep aria-label="更多样式"><Dash /><Caret /></ScrollStep></GalleryScroll>
        </Gallery>
        <FillWrap>
          <FillButton aria-haspopup="menu">
            <FillFace>
              <Icon w={36} h={36}>
                <path d="M7 19 H29 L18 29 Z" fill="#ddd" stroke="none" />
                <path d="M19 2 L32 15 L18 29 L5 16 Z M5 10 H18 M32 15 V25" stroke="#333" />
                <rect x="1" y="28" width="34" height="6" rx="2" fill="#fff" stroke="#555" strokeWidth="1" />
                <path d="M16 33 L21 29" stroke="#d84a4a" />
              </Icon>
            </FillFace>
            <Label><MenuLabel>填充</MenuLabel></Label>
          </FillButton>
          <FillMenu />
        </FillWrap>
        <BigButton $ml={8}>
          <Icon w={36} h={34}><path d="M3 28 V4 H33 V28 M8 28 V9 H28 V28" stroke="#333" /><rect x="1" y="28" width="34" height="5" rx="2" fill="#b8dfe1" stroke="#7d9a9c" strokeWidth="1" /></Icon>
          <Label><MenuLabel>轮廓</MenuLabel></Label>
        </BigButton>
        <Stack $ml={16}>
          <TextButton $muted>
            <Icon w={24} h={24} color="#aaa"><path d="M9 12 V3 Q11 -1 13 3 V12 H20 V23 H4 V12 Z M4 16 H20" /></Icon>
            格式刷
          </TextButton>
          <TextButton>
            <Icon w={24} h={24}><path d="M12 20 H1 V1 H22 V12 M1 15 L6 11 L12 15 L16 12" stroke="#444" /><circle cx="8" cy="6" r="2" stroke="#888" /><path d="M13 20 H17 M15 18 V22 M18 15 H22 M20 13 V17 M20 21 H24" stroke="#e0703a" /></Icon>
            <MenuLabel>形状效果</MenuLabel>
          </TextButton>
        </Stack>
      </Group>
      <Group $ml={14}>
        <BigButton>
          <Icon w={36} h={34}><rect x="2" y="1" width="22" height="22" rx="2" stroke="#333" /><rect x="13" y="12" width="21" height="21" rx="2" fill={ORF} fillOpacity="0.8" stroke={OR} /><circle cx="30" cy="5" r="2" fill={OR} stroke="none" /><circle cx="6" cy="29" r="2" fill="#333" stroke="none" /></Icon>
          <Label><MenuLabel>组合</MenuLabel></Label>
        </BigButton>
        <Stack $ml={16}>
          <TextButton>
            <Icon w={24} h={24}><path d="M2 15 Q2 5 12 4 M9 0 L13 4 L9 8" stroke={OR} /><path d="M17 0 V3 M17 6 V9" stroke="#888" /><path d="M1 17 H23 M17 12 V23" stroke="#333" /></Icon>
            <MenuLabel>旋转</MenuLabel>
          </TextButton>
          <TextButton>
            <Icon w={24} h={24}><path d="M1 0 V24" stroke="#333" /><rect x="4" y="2" width="12" height="8" rx="1" stroke="#333" /><rect x="4" y="14" width="19" height="8" rx="1" fill={ORF} stroke={OR} /></Icon>
            <MenuLabel>对齐</MenuLabel>
          </TextButton>
        </Stack>
        <Stack $ml={10}>
          <TextButton><Diamonds up /><MenuLabel>上移一层</MenuLabel></TextButton>
          <TextButton><Diamonds /><MenuLabel>下移一层</MenuLabel></TextButton>
        </Stack>
        <BigButton $ml={14}>
          <Icon w={36} h={34}><rect x="3" y="2" width="15" height="13" fill="#ddd" stroke="none" /><path d="M15 27 H2 V1 H32 V18" stroke="#333" /><path d="M5 14 H16 M18 4 V12" stroke="#999" strokeDasharray="3 2" /><path d="M19 15 L35 27 L25 28 L19 34 Z" fill={ORF} stroke={OR} /></Icon>
          <Label><MenuLabel>选择</MenuLabel></Label>
        </BigButton>
      </Group>
      <Group $pr={7}>
        <SizeStack>
          <SizeField id="shape-height" label="高度:" value="4.40厘米" tall />
          <SizeField id="shape-width" label="宽度:" value="5.80厘米" />
        </SizeStack>
        <Launcher aria-label="大小选项" />
      </Group>
    </Ribbon>
  );
}

function OutlinePane() {
  return (
    <Outline>
      <OutlineHead>
        <button aria-label="收起窗格"><Icon w={16} h={16} color={NAVY}><path d="M8 1 L1 8 L8 15 M15 1 L8 8 L15 15" /></Icon></button>
        <OutlineTab>大纲</OutlineTab>
        <OutlineTab $on>幻灯片</OutlineTab>
      </OutlineHead>
      <ThumbRow>
        <span>1</span>
        <Thumb aria-label="幻灯片 1">
          <Svg width="286" height="214" viewBox="0 0 286 214" strokeWidth="2">
            <path d="M16 128 L48 78 L81 128 Z M67 79 H132 L99 128 Z" />
          </Svg>
        </Thumb>
      </ThumbRow>
      <AddSlide aria-label="新建幻灯片"><Icon w={24} h={24}><path d="M12 0 V24 M0 12 H24" strokeWidth="2.5" /></Icon></AddSlide>
    </Outline>
  );
}

function SlideCanvas() {
  return (
    <Slide>
      <SlideArt viewBox="0 0 1296 972" fill="none">
        <g stroke="#88a4a8" strokeWidth="2"><path d="M71 584 L219 360 L367 584 Z" /><path d="M301 360 H597 L449 584 Z" /></g>
        <g stroke="#1f1f1f"><rect x="71" y="359" width="296" height="225" /><rect x="301" y="359" width="296" height="225" /></g>
        <path d="M219 334 V352" stroke="#888" />
        <g fill="#fff" stroke="#2b2b2b" strokeWidth="1">{handles.map(([x, y]) => <circle key={`${x}-${y}`} cx={x} cy={y} r="8" />)}</g>
        <circle cx="218" cy="321" r="14" fill="#242424" />
        <path d="M219 328 A7 7 0 1 1 225 321" stroke="#fff" strokeWidth="3" />
        <path d="M220 321 H230 L225 327 Z" fill="#fff" />
      </SlideArt>
      <FloatBar role="toolbar">
        {alignIcons.map((node, i) => (
          <button key={alignNames[i]} aria-label={alignNames[i]}><Icon w={28} h={28}>{node}</Icon></button>
        ))}
      </FloatBar>
    </Slide>
  );
}

function SideBar() {
  return (
    <SidePane>
      <SideGrip aria-label="任务窗格"><Icon w={24} h={8} color="#bbb"><path d="M0 1 H24 M0 6 H24" /></Icon></SideGrip>
      <SideButton aria-label="对象属性"><Icon w={24} h={24}><circle cx="4" cy="5" r="3" /><path d="M7 5 H24 M0 19 H14 M20 19 H24" /><circle cx="17" cy="19" r="3" /></Icon></SideButton>
      <SideButton aria-label="动画"><Icon w={24} h={24}><path d="M14 1 L17 7 L23 8 L19 12 L20 18 L14 15 L9 18 L10 12 L5 8 L11 7 Z M0 15 L4 11 M2 22 L6 18 M12 24 L16 20" /></Icon></SideButton>
      <SideButton aria-label="切换"><Icon w={24} h={24}><path d="M18 2 H1 V20 H12 M9 16 L13 20 L9 24 M6 14 V6 H23 V21 H17" /></Icon></SideButton>
      <SideButton aria-label="帮助"><Icon w={24} h={24}><circle cx="12" cy="12" r="11" /><path d="M7 9 A4 4 0 1 1 13 13 Q12 14 12 15 M12 17 V19" /></Icon></SideButton>
      <SideButton aria-label="灵感"><Icon w={24} h={24} color="#aaa"><path d="M8 17 A9 9 0 1 1 16 17 L14 20 H10 Z M8 17 H16 M8 23 H16 M7 8 L10 11 L13 9 L17 11" /></Icon></SideButton>
      <SideButton aria-label="文字"><Icon w={24} h={24}><path d="M3 7 V3 H21 V7 M12 3 V21 M7 21 H17" /></Icon></SideButton>
      <SideMore aria-label="更多窗格"><Icon w={26} h={8} color={NAVY}><circle cx="4" cy="4" r="2" /><circle cx="13" cy="4" r="2" /><circle cx="22" cy="4" r="2" /></Icon></SideMore>
    </SidePane>
  );
}

function Status() {
  return (
    <StatusBar>
      <span>幻灯片 1 / 1</span>
      <VLine $h={36} $ml={19} $mr={16} />
      <span>默认设计模板</span>
      <VLine $h={36} $ml={16} />
      <StatusTools>
        <TextButton $gap={7}>
          <Icon w={22} h={24}><path d="M1 7 V18 L11 23 L21 18 V7 L11 14 L1 7 M6 5 L11 2 L16 5" /></Icon>
          智能美化
          <Row $ml={5}><Caret $up $color="#555" /></Row>
        </TextButton>
        <VLine $h={36} $ml={18} $mr={15} />
        <TextButton $gap={2}>
          <Icon w={26} h={24}><path d="M0 3 H12 M0 12 H24 M0 21 H24 M15 2 L19 7 L24 2" /></Icon>
          备注
          <Row $ml={4}><Caret /></Row>
        </TextButton>
        <Row $ml={15}>
          <TextButton>
            <Icon w={24} h={24}><path d="M12 2 H21 Q23 2 23 4 V18 L19 22 H3 V12 M9 9 H19 M8 14 H19" /><path d="M1 1 L9 9 M9 1 L1 9 M5 0 V10" stroke={OR} strokeWidth="1.2" /></Icon>
            批注
          </TextButton>
        </Row>
        <VLine $h={36} $ml={16} $mr={8} />
        <ViewButton $on aria-label="普通视图"><Icon w={24} h={22}><path d="M1 1 H23 V21 H1 Z M8 1 V21 M8 15 H23" /></Icon></ViewButton>
        <ViewButton aria-label="浏览视图"><Icon w={22} h={22}><path d="M1 1 H8 V8 H1 Z M14 1 H21 V8 H14 Z M1 14 H8 V21 H1 Z M14 14 H21 V21 H14 Z" /></Icon></ViewButton>
        <ViewButton aria-label="阅读视图"><Icon w={24} h={24}><path d="M12 3 Q8 1 1 2 V20 H8 L12 22 L16 20 H23 V2 Q16 1 12 3 V22" /></Icon></ViewButton>
        <VLine $h={36} $ml={11} />
        <PlayButton aria-label="放映"><Icon w={16} h={18}><path d="M2 1 L15 9 L2 17 Z" fill="#fff" stroke="none" /></Icon></PlayButton>
        <Caret />
        <VLine $h={36} $ml={12} $mr={15} />
        <TextButton $gap={8}>
          <Icon w={24} h={24} color={NAVY}><path d="M1 7 V1 H7 M17 1 H23 V7 M23 17 V23 H17 M7 23 H1 V17 M7 6 H17 V18 H7 Z" /></Icon>
          <Row $ml={3}>90%</Row>
          <Caret />
        </TextButton>
        <Row $ml={18}>
          <button aria-label="缩小"><Icon w={16} h={16} color={NAVY}><path d="M0 8 H16" strokeWidth="3" /></Icon></button>
          <ZoomSlider type="range" aria-label="缩放" min={0} max={100} defaultValue={43} />
          <button aria-label="放大"><Icon w={16} h={16} color={NAVY}><path d="M0 8 H16 M8 0 V16" strokeWidth="3" /></Icon></button>
        </Row>
      </StatusTools>
    </StatusBar>
  );
}

export default function App() {
  return (
    <Shell>
      <GlobalStyle />
      <Title />
      <RibbonBar />
      <Body>
        <OutlinePane />
        <Main>
          <Stage>
            <Workspace><SlideCanvas /></Workspace>
            <ScrollTrack>
              <ScrollArrow aria-label="向上滚动"><Caret $up $color="#b5b5b5" /></ScrollArrow>
              <ScrollArrow $bottom aria-label="向下滚动"><Caret $color="#b5b5b5" /></ScrollArrow>
              <ScrollArrow aria-label="上一张"><Caret $up $color="#b5b5b5" /><Caret $up $color="#b5b5b5" /></ScrollArrow>
              <ScrollArrow aria-label="下一张"><Caret $color="#b5b5b5" /><Caret $color="#b5b5b5" /></ScrollArrow>
            </ScrollTrack>
          </Stage>
          <Notes>
            <Icon w={24} h={24} color={NAVY}><path d="M0 3 H24 M0 12 H24 M0 20 H12 M15 20 H23 M19 16 V24" /></Icon>
            <NotesInput aria-label="备注" placeholder="单击此处添加备注" />
          </Notes>
        </Main>
        <SideBar />
      </Body>
      <Status />
      <Meter>
        <Svg width="8" height="69" viewBox="0 0 8 69">
          <defs>
            <linearGradient id="level" x1="0" y1="0" x2="0" y2="1"><stop offset="0" stopColor="#d8c040" /><stop offset="0.5" stopColor="#8fcf70" /><stop offset="1" stopColor="#4cc9b8" /></linearGradient>
          </defs>
          {Array.from({ length: 9 }, (_, i) => <rect key={i} y={i * 3} width="7" height="2" fill="#343946" stroke="none" />)}
          <rect y="27" width="7" height="42" fill="url(#level)" stroke="none" />
          {Array.from({ length: 14 }, (_, i) => <rect key={i} y={29 + i * 3} width="7" height="1" fill="#4a5060" stroke="none" />)}
        </Svg>
      </Meter>
      <Watermark width="390" height="195" viewBox="0 0 390 195" fill="#fff">
        <mask id="paw">
          <rect width="390" height="195" fill="#fff" />
          <text x="157" y="119" fontFamily="Inter, sans-serif" fontWeight="700" fontSize="52" fill="#000">du</text>
        </mask>
        <text x="1" y="128" fontFamily="Inter, sans-serif" fontWeight="800" fontSize="88">Bai</text>
        <ellipse cx="150" cy="55" rx="14" ry="18" />
        <ellipse cx="177" cy="28" rx="14" ry="19" />
        <ellipse cx="212" cy="30" rx="14" ry="18" transform="rotate(10 212 30)" />
        <ellipse cx="233" cy="63" rx="15" ry="18" />
        <path mask="url(#paw)" d="M190 58 C180 58 175 65 172 73 C166 84 158 87 152 92 C146 97 143 102 143 108 C143 120 150 129 163 129 C175 130 180 127 190 127 C200 127 206 131 218 130 C232 129 239 120 239 108 C239 99 234 93 228 88 C220 82 214 78 210 70 C206 62 200 58 190 58 Z" />
        <text x="251" y="122" fontFamily="'Noto Sans CJK SC', sans-serif" fontWeight="900" fontSize="66">经验</text>
        <text x="4" y="178" fontFamily="'Open Sans', sans-serif" fontWeight="400" fontSize="45">jingyan.baidu.com</text>
      </Watermark>
    </Shell>
  );
}
